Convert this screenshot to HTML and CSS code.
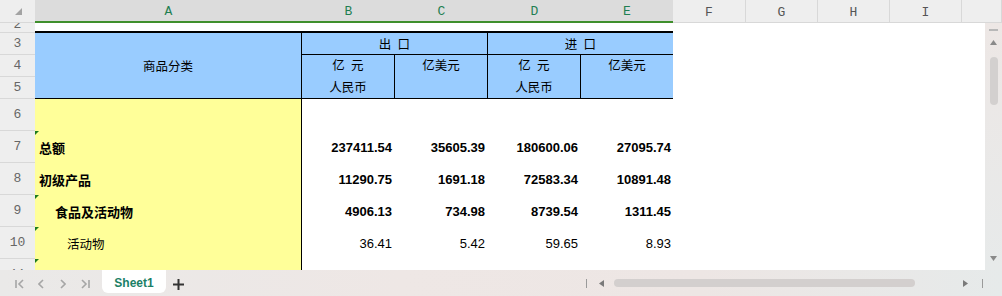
FILE: index.html
```html
<!DOCTYPE html>
<html lang="zh-CN">
<head>
    <meta charset="UTF-8">
    <title>商品分类 - Sheet1</title>
    <link rel="stylesheet" href="styles.css">
</head>
<body>
    <div class="sheet">
        <!-- 列标题 -->
        <div class="col-heads">
            <div class="corner">
                <svg width="7" height="7" viewBox="0 0 7 7"><polygon points="7,0 7,7 0,7" fill="#a3a3a3"/></svg>
            </div>
            <div class="ch sel">A</div>
            <div class="ch sel">B</div>
            <div class="ch sel">C</div>
            <div class="ch sel">D</div>
            <div class="ch sel">E</div>
            <div class="ch">F</div>
            <div class="ch">G</div>
            <div class="ch">H</div>
            <div class="ch">I</div>
            <div class="ch"></div>
        </div>

        <div class="main">
            <div class="grid">
                <!-- 行2 -->
                <div class="rh cut"><span>2</span></div>
                <div class="top-rule"></div>

                <!-- 行3-5 表头 -->
                <div class="rh">3</div>
                <div class="hd hd-a">商品分类</div>
                <div class="hd hd-grp">出&ensp;口</div>
                <div class="hd hd-grp last">进&ensp;口</div>

                <div class="rh">4</div>
                <div class="hd hd-unit">亿&ensp;元<br>人民币</div>
                <div class="hd hd-unit">亿美元</div>
                <div class="hd hd-unit">亿&ensp;元<br>人民币</div>
                <div class="hd hd-unit last">亿美元</div>

                <div class="rh">5</div>

                <!-- 数据行 -->
                <div class="rh">6</div>
                <div class="cat"></div>
                <div class="num"></div><div class="num"></div><div class="num"></div><div class="num last"></div>

                <div class="rh">7</div>
                <div class="cat b flag">总额</div>
                <div class="num b">237411.54</div>
                <div class="num b">35605.39</div>
                <div class="num b">180600.06</div>
                <div class="num b last">27095.74</div>

                <div class="rh">8</div>
                <div class="cat b">初级产品</div>
                <div class="num b">11290.75</div>
                <div class="num b">1691.18</div>
                <div class="num b">72583.34</div>
                <div class="num b last">10891.48</div>

                <div class="rh">9</div>
                <div class="cat b l2 flag">食品及活动物</div>
                <div class="num b">4906.13</div>
                <div class="num b">734.98</div>
                <div class="num b">8739.54</div>
                <div class="num b last">1311.45</div>

                <div class="rh">10</div>
                <div class="cat l3 flag">活动物</div>
                <div class="num">36.41</div>
                <div class="num">5.42</div>
                <div class="num">59.65</div>
                <div class="num last">8.93</div>

                <div class="rh">11</div>
                <div class="cat l3 flag">肉及肉制品</div>
                <div class="num">134.18</div>
                <div class="num">20.13</div>
                <div class="num">2088.10</div>
                <div class="num last">313.70</div>
            </div>

            <!-- 竖向滚动条 -->
            <div class="vscroll">
                <div class="vs-dash"></div>
                <svg class="vs-up" width="7" height="5" viewBox="0 0 7 5"><polygon points="3.5,0 7,5 0,5" fill="#8a8a8a"/></svg>
                <div class="vs-thumb"></div>
                <div class="vs-space"></div>
                <svg class="vs-down" width="7" height="5" viewBox="0 0 7 5"><polygon points="0,0 7,0 3.5,5" fill="#8a8a8a"/></svg>
            </div>
        </div>

        <!-- 工作表标签栏 -->
        <div class="tabs">
            <div class="nav first">
                <svg width="9" height="10" viewBox="0 0 9 10"><path d="M1 1v8M8 1L4 5l4 4" stroke="#a6a6a6" stroke-width="1.6" fill="none"/></svg>
            </div>
            <div class="nav">
                <svg width="6" height="10" viewBox="0 0 6 10"><path d="M5 1L1 5l4 4" stroke="#a6a6a6" stroke-width="1.6" fill="none"/></svg>
            </div>
            <div class="nav">
                <svg width="6" height="10" viewBox="0 0 6 10"><path d="M1 1l4 4-4 4" stroke="#a6a6a6" stroke-width="1.6" fill="none"/></svg>
            </div>
            <div class="nav">
                <svg width="9" height="10" viewBox="0 0 9 10"><path d="M1 1l4 4-4 4M8 1v8" stroke="#a6a6a6" stroke-width="1.6" fill="none"/></svg>
            </div>
            <div class="tab">Sheet1</div>
            <div class="add">
                <svg width="11" height="11" viewBox="0 0 11 11"><path d="M5.5 0v11M0 5.5h11" stroke="#333" stroke-width="2"/></svg>
            </div>
            <div class="hscroll">
                <div class="hs-bar"></div>
                <svg class="hs-left" width="5" height="7" viewBox="0 0 5 7"><polygon points="5,0 5,7 0,3.5" fill="#7a7a7a"/></svg>
                <div class="hs-thumb"></div>
                <svg class="hs-right" width="5" height="7" viewBox="0 0 5 7"><polygon points="0,0 5,3.5 0,7" fill="#7a7a7a"/></svg>
                <div class="hs-bar end"></div>
            </div>
        </div>
    </div>
</body>
</html>
```

FILE: styles.css
```css
* {
    margin: 0;
    padding: 0;
    box-sizing: border-box;
}

body {
    width: 1002px;
    height: 296px;
    overflow: hidden;
    background: #fff;
    font-family: "Liberation Sans", "Noto Sans CJK SC", sans-serif;
    color: #000;
}

.sheet {
    display: flex;
    flex-direction: column;
    height: 296px;
}

/* 列标题 */
.col-heads {
    display: grid;
    grid-template-columns: 35px 267px 93px 93px 93px 92px 73px 72px 72px 72px 1fr;
    height: 23px;
}

.corner {
    background: #eee;
    border-bottom: 1px solid #d8d8d8;
    display: flex;
    align-items: flex-end;
    justify-content: flex-end;
    padding: 0 13px 7px 0;
}

.ch {
    background: #eee;
    border-right: 1px solid #d8d8d8;
    border-bottom: 1px solid #d8d8d8;
    font: 13px "Liberation Mono", monospace;
    color: #555;
    display: flex;
    align-items: center;
    justify-content: center;
    padding-top: 2px;
}

.ch.sel {
    background: #dcdcdc;
    color: #1f7f52;
    border-right: none;
    border-bottom: 2px solid #3f8f2c;
}

/* 表格区域 */
.main {
    display: flex;
    height: 247px;
}

.grid {
    flex: 1;
    display: grid;
    grid-template-columns: 35px 267px 93px 93px 93px 92px;
    grid-template-rows: 10px 22px 22px 22px repeat(6, 32px);
    overflow: hidden;
}

.rh {
    grid-column: 1;
    background: #eee;
    border-bottom: 1px solid #d8d8d8;
    font: 13px "Liberation Mono", monospace;
    color: #666;
    display: flex;
    align-items: center;
    justify-content: center;
}

.rh.cut {
    overflow: hidden;
}

.rh.cut span {
    margin-top: -6px;
}

.top-rule {
    grid-column: span 5;
    border-bottom: 2px solid #000;
}

.hd {
    background: #99ccff;
    border-right: 1px solid #000;
    border-bottom: 1px solid #000;
    font-size: 12.5px;
    text-align: center;
}

.hd.last {
    border-right: none;
}

.hd-a {
    grid-row: span 3;
    display: flex;
    align-items: center;
    justify-content: center;
}

.hd-grp {
    grid-column: span 2;
    display: flex;
    align-items: center;
    justify-content: center;
}

.hd-unit {
    grid-row: span 2;
    line-height: 22px;
}

.cat {
    position: relative;
    background: #ffff99;
    border-right: 1px solid #000;
    display: flex;
    align-items: center;
    padding-left: 4px;
    font-size: 12.5px;
    white-space: nowrap;
}

.cat.b {
    font-weight: bold;
    font-size: 13px;
}

.cat.l2 {
    padding-left: 20px;
}

.cat.l3 {
    padding-left: 32px;
}

/* 单元格左上角的绿色小三角 */
.cat.flag::before {
    content: "";
    position: absolute;
    left: 0;
    top: 0;
    border-top: 4px solid #1d7a1d;
    border-right: 4px solid transparent;
}

.num {
    display: flex;
    align-items: center;
    justify-content: flex-end;
    padding-right: 3px;
    font-size: 13px;
}

.num.last {
    padding-right: 2px;
}

.num.b {
    font-weight: bold;
}

/* 竖向滚动条 */
.vscroll {
    width: 17px;
    background: linear-gradient(#ede7e5, #e7eaea);
    display: flex;
    flex-direction: column;
    align-items: center;
}

.vs-dash {
    width: 9px;
    height: 2px;
    margin-top: 6px;
    background: #b8b8b8;
}

.vs-up {
    margin-top: 9px;
}

.vs-thumb {
    width: 8px;
    height: 48px;
    margin-top: 12px;
    border-radius: 4px;
    background: #d3d0cf;
}

.vs-space {
    flex: 1;
}

.vs-down {
    margin-bottom: 9px;
}

/* 标签栏 */
.tabs {
    height: 26px;
    display: flex;
    align-items: center;
    background: linear-gradient(90deg, #eae9e8 0%, #eee7e5 40%, #ede6e4 70%, #e6eaea 100%);
}

.nav {
    width: 22px;
    height: 26px;
    display: flex;
    align-items: center;
    justify-content: center;
    padding-top: 1px;
}

.nav.first {
    margin-left: 8px;
}

.tab {
    align-self: flex-start;
    margin-left: 6px;
    width: 64px;
    height: 23px;
    background: #fff;
    border-radius: 0 0 6px 6px;
    font-weight: bold;
    font-size: 12px;
    color: #1b7f66;
    display: flex;
    align-items: center;
    justify-content: center;
    padding-top: 2px;
}

.add {
    width: 24px;
    display: flex;
    justify-content: center;
    padding-top: 2px;
}

.hscroll {
    margin-left: auto;
    width: 422px;
    display: flex;
    align-items: center;
}

.hs-bar {
    width: 1px;
    height: 9px;
    margin-left: 6px;
    background: #9a9a9a;
}

.hs-bar.end {
    margin-left: 14px;
}

.hs-left {
    margin-left: 12px;
}

.hs-thumb {
    width: 301px;
    height: 8px;
    margin-left: 10px;
    border-radius: 4px;
    background: #d3cfce;
}

.hs-right {
    margin-left: 48px;
}
```
